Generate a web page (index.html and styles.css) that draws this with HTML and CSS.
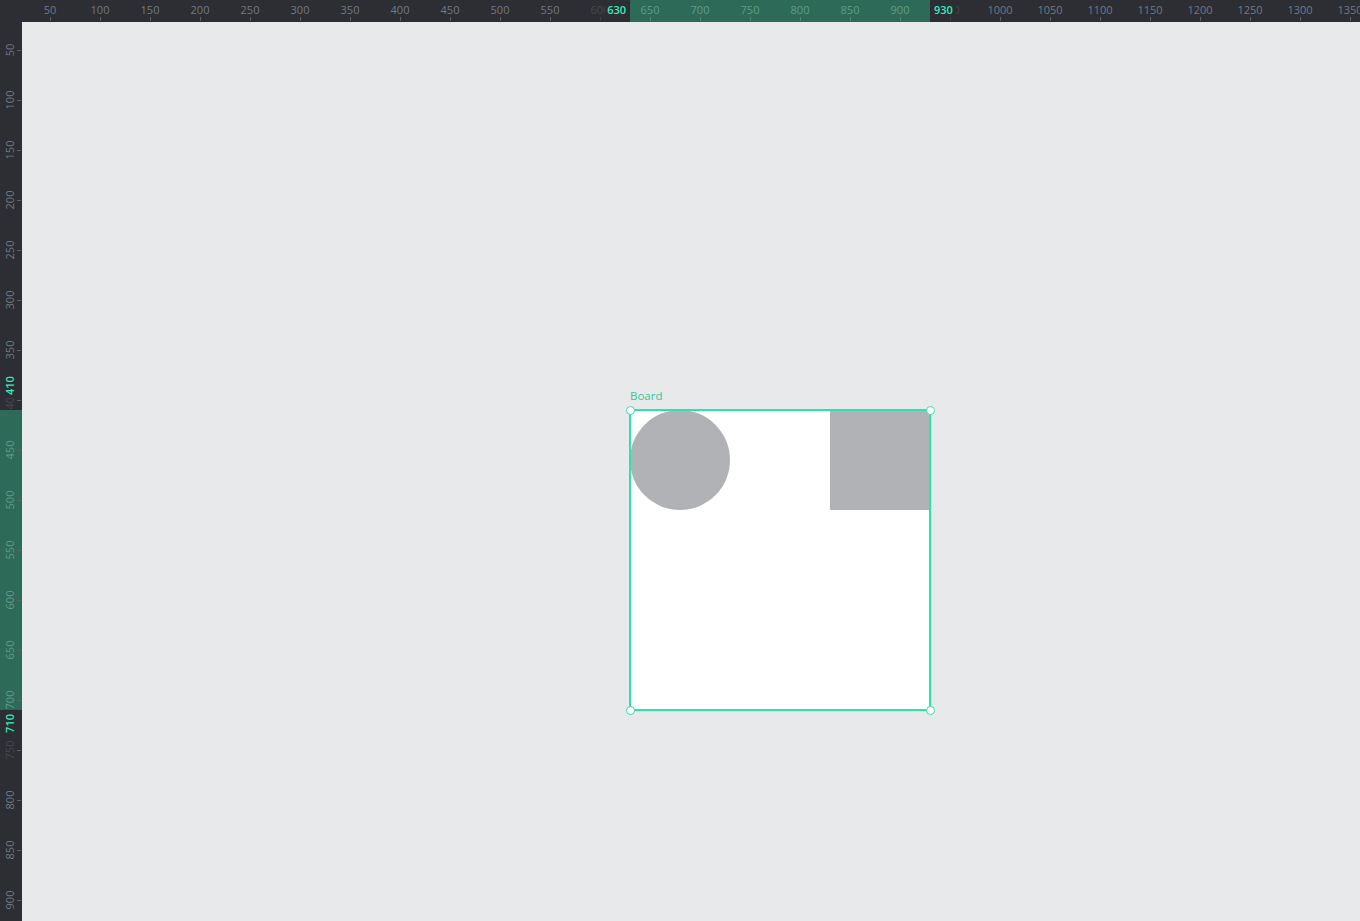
FILE: index.html
```html
<!DOCTYPE html>
<html>
<head>
<meta charset="utf-8">
<link rel="stylesheet" href="styles.css">
</head>
<body>
<div class="app">
  <div class="corner"></div>
  <div class="ruler ruler-top">
    <div class="band" style="left:608px;width:300px"></div>
    <span class="hl" style="left:28px">50</span><i class="ht" style="left:28px"></i>
    <span class="hl" style="left:78px">100</span><i class="ht" style="left:78px"></i>
    <span class="hl" style="left:128px">150</span><i class="ht" style="left:128px"></i>
    <span class="hl" style="left:178px">200</span><i class="ht" style="left:178px"></i>
    <span class="hl" style="left:228px">250</span><i class="ht" style="left:228px"></i>
    <span class="hl" style="left:278px">300</span><i class="ht" style="left:278px"></i>
    <span class="hl" style="left:328px">350</span><i class="ht" style="left:328px"></i>
    <span class="hl" style="left:378px">400</span><i class="ht" style="left:378px"></i>
    <span class="hl" style="left:428px">450</span><i class="ht" style="left:428px"></i>
    <span class="hl" style="left:478px">500</span><i class="ht" style="left:478px"></i>
    <span class="hl" style="left:528px">550</span><i class="ht" style="left:528px"></i>
    <span class="hl dim" style="left:578px">600</span><i class="ht dimt" style="left:578px"></i>
    <span class="hl in" style="left:628px">650</span><i class="ht int" style="left:628px"></i>
    <span class="hl in" style="left:678px">700</span><i class="ht int" style="left:678px"></i>
    <span class="hl in" style="left:728px">750</span><i class="ht int" style="left:728px"></i>
    <span class="hl in" style="left:778px">800</span><i class="ht int" style="left:778px"></i>
    <span class="hl in" style="left:828px">850</span><i class="ht int" style="left:828px"></i>
    <span class="hl in" style="left:878px">900</span><i class="ht int" style="left:878px"></i>
    <span class="hl dim" style="left:928px">950</span><i class="ht dimt" style="left:928px"></i>
    <span class="hl" style="left:978px">1000</span><i class="ht" style="left:978px"></i>
    <span class="hl" style="left:1028px">1050</span><i class="ht" style="left:1028px"></i>
    <span class="hl" style="left:1078px">1100</span><i class="ht" style="left:1078px"></i>
    <span class="hl" style="left:1128px">1150</span><i class="ht" style="left:1128px"></i>
    <span class="hl" style="left:1178px">1200</span><i class="ht" style="left:1178px"></i>
    <span class="hl" style="left:1228px">1250</span><i class="ht" style="left:1228px"></i>
    <span class="hl" style="left:1278px">1300</span><i class="ht" style="left:1278px"></i>
    <span class="hl" style="left:1328px">1350</span><i class="ht" style="left:1328px"></i>
    <span class="sel sel-start" style="left:606px">630</span>
    <span class="sel sel-end" style="left:908px">930</span>
  </div>
  <div class="ruler ruler-left">
    <div class="vband" style="top:388px;height:300px"></div>
    <span class="vl" style="top:28px">50</span><i class="vt" style="top:28px"></i>
    <span class="vl" style="top:78px">100</span><i class="vt" style="top:78px"></i>
    <span class="vl" style="top:128px">150</span><i class="vt" style="top:128px"></i>
    <span class="vl" style="top:178px">200</span><i class="vt" style="top:178px"></i>
    <span class="vl" style="top:228px">250</span><i class="vt" style="top:228px"></i>
    <span class="vl" style="top:278px">300</span><i class="vt" style="top:278px"></i>
    <span class="vl" style="top:328px">350</span><i class="vt" style="top:328px"></i>
    <span class="vl dim" style="top:378px">400</span><i class="vt dimt" style="top:378px"></i>
    <span class="vl in" style="top:428px">450</span><i class="vt int" style="top:428px"></i>
    <span class="vl in" style="top:478px">500</span><i class="vt int" style="top:478px"></i>
    <span class="vl in" style="top:528px">550</span><i class="vt int" style="top:528px"></i>
    <span class="vl in" style="top:578px">600</span><i class="vt int" style="top:578px"></i>
    <span class="vl in" style="top:628px">650</span><i class="vt int" style="top:628px"></i>
    <span class="vl in" style="top:678px">700</span><i class="vt int" style="top:678px"></i>
    <span class="vl dim" style="top:728px">750</span><i class="vt dimt" style="top:728px"></i>
    <span class="vl" style="top:778px">800</span><i class="vt" style="top:778px"></i>
    <span class="vl" style="top:828px">850</span><i class="vt" style="top:828px"></i>
    <span class="vl" style="top:878px">900</span><i class="vt" style="top:878px"></i>
    <span class="vsel vsel-start" style="top:376px">410</span>
    <span class="vsel vsel-end" style="top:688px">710</span>
  </div>
  <div class="canvas">
    <div class="board-title">Board</div>
    <div class="board">
      <div class="shape circle"></div>
      <div class="shape square"></div>
    </div>
    <div class="selection">
      <span class="handle h-tl"></span>
      <span class="handle h-tr"></span>
      <span class="handle h-bl"></span>
      <span class="handle h-br"></span>
    </div>
  </div>
</div>
</body>
</html>
```
FILE: styles.css
```css
* { box-sizing: border-box; }
html, body {
  margin: 0;
  padding: 0;
  width: 1360px;
  height: 921px;
  overflow: hidden;
  background: #e8e9ea;
  font-family: "Open Sans", "Liberation Sans", sans-serif;
}
.app {
  display: grid;
  grid-template-columns: 22px 1fr;
  grid-template-rows: 22px 1fr;
  width: 1360px;
  height: 921px;
}
.corner { background: #2c2e33; }
.ruler {
  position: relative;
  background: #2c2e33;
  overflow: hidden;
  color: #737884;
  font-size: 11px;
}
.band {
  position: absolute;
  top: 0;
  bottom: 0;
  background: #2e6a58;
}
.vband {
  position: absolute;
  left: 0;
  right: 0;
  background: #2e6a58;
}
.hl {
  position: absolute;
  top: 3px;
  line-height: 14px;
  transform: translateX(-50%);
  white-space: nowrap;
}
.ht {
  position: absolute;
  top: 17px;
  width: 1px;
  height: 4px;
  background: #5b5f69;
}
.in { color: #5f9c88; }
.int { background: #4f8a78; }
.dim { color: #45484f; }
.dimt { background: #3e4147; }
.sel {
  position: absolute;
  top: 3px;
  line-height: 14px;
  color: #31efb8;
  font-weight: 600;
  background: #2c2e33;
  white-space: nowrap;
}
.sel-start { transform: translateX(-100%); padding: 0 2px 0 2px; }
.sel-end { padding: 0 3px 0 4px; }
.vl {
  position: absolute;
  left: 3px;
  line-height: 14px;
  writing-mode: vertical-rl;
  transform: translateY(-50%) rotate(180deg);
  white-space: nowrap;
}
.vt {
  position: absolute;
  left: 17px;
  width: 4px;
  height: 1px;
  background: #5b5f69;
}
.vsel {
  position: absolute;
  left: 3px;
  line-height: 14px;
  writing-mode: vertical-rl;
  color: #31efb8;
  font-weight: 600;
  background: #2c2e33;
  white-space: nowrap;
}
.vsel-start { transform: translateY(-100%) rotate(180deg); padding: 3px 0 3px 0; }
.vsel-end { transform: rotate(180deg); padding: 3px 0 4px 0; }
.canvas {
  position: relative;
  background: #e8e9ea;
  overflow: hidden;
}
.board-title {
  position: absolute;
  left: 608px;
  top: 367px;
  font-size: 11.5px;
  line-height: 14px;
  color: #2fc99b;
}
.board {
  position: absolute;
  left: 608px;
  top: 388px;
  width: 300px;
  height: 300px;
  background: #ffffff;
}
.shape {
  position: absolute;
  top: 0;
  width: 100px;
  height: 100px;
  background: #b1b2b5;
}
.circle { left: 0; border-radius: 50%; }
.square { right: 0; }
.selection {
  position: absolute;
  left: 607px;
  top: 387px;
  width: 302px;
  height: 302px;
  border: 2px solid #31e0aa;
}
.handle {
  position: absolute;
  width: 9px;
  height: 9px;
  border-radius: 50%;
  background: #ffffff;
  border: 1.5px solid #31e0aa;
}
.h-tl { left: -5.5px; top: -5.5px; }
.h-tr { right: -5.5px; top: -5.5px; }
.h-bl { left: -5.5px; bottom: -5.5px; }
.h-br { right: -5.5px; bottom: -5.5px; }
```
